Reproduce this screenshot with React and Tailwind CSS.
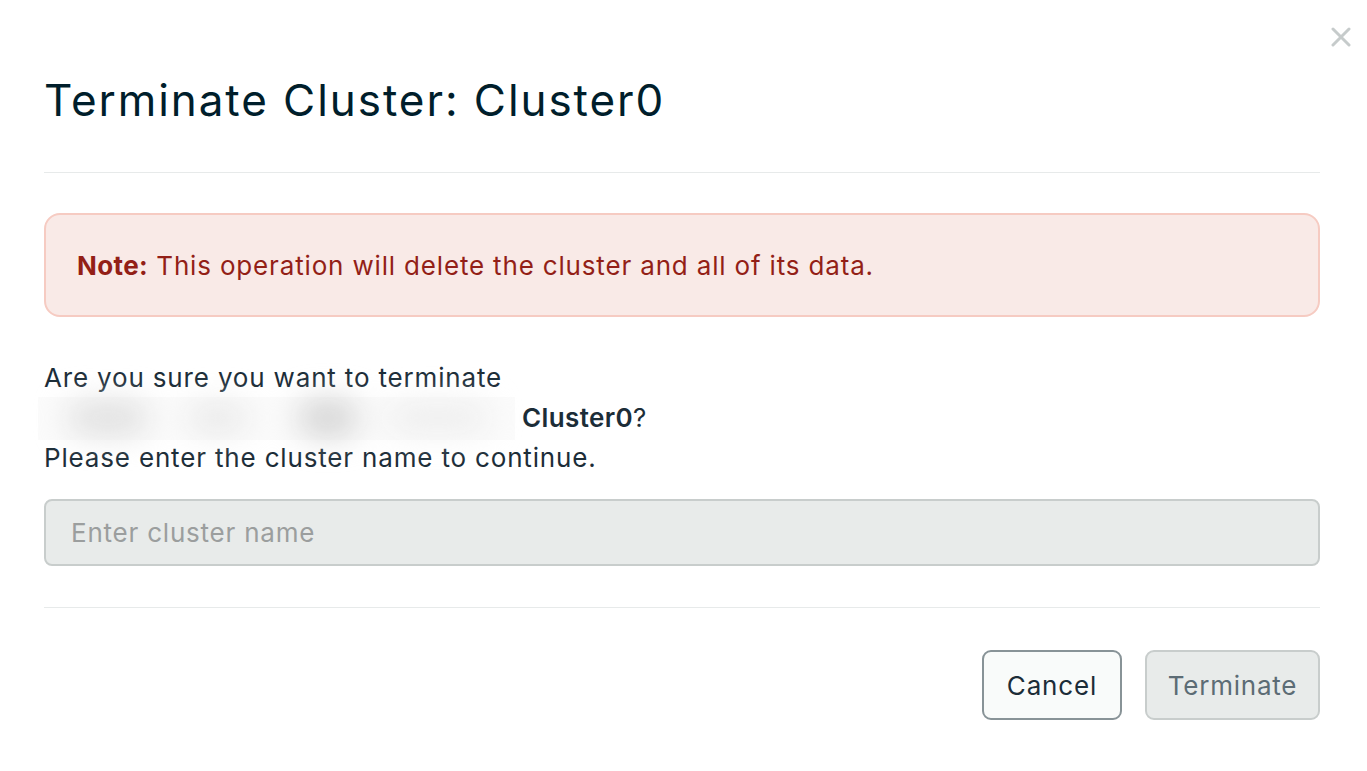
export default function App() {
  const font = { fontFamily: '"Inter", "Open Sans", sans-serif' };
  return (
    <div className="relative w-[1367px] h-[771px] bg-white overflow-hidden tracking-[0.052em]" style={font}>
      <button className="absolute top-[26px] right-[15px] w-[22px] h-[22px] flex items-center justify-center">
        <svg width="20" height="20" viewBox="0 0 20 20" fill="none">
          <path d="M2 2L18 18M18 2L2 18" stroke="#c6cbcb" strokeWidth="3" strokeLinecap="round" />
        </svg>
      </button>
      <div className="pl-[44px] pr-[47px] pt-[76px]">
        <h1 className="text-[44px] leading-[48px] text-[#001e2b] font-normal tracking-[0.044em]">
          Terminate Cluster: Cluster0
        </h1>
        <div className="mt-[48px] h-px bg-[#e7eaea]" />
        <div className="mt-[40px] h-[104px] rounded-[16px] border-2 border-[#f6cbc2] bg-[#f9eae7] flex items-center px-[31px]">
          <p className="text-[26px] text-[#931f17]">
            <span className="font-bold tracking-[0.015em]">Note:</span> This operation will delete the cluster and all of its data.
          </p>
        </div>
        <div className="mt-[41px] text-[26px] leading-[40px] text-[#1c2d38]">
          <p>Are you sure you want to terminate</p>
          <div className="flex items-center h-[40px]">
            <div className="-ml-[6px] mr-[7px] w-[477px] h-[43px] shrink-0 flex items-center bg-[#fbfbfb]">
              <div className="w-full h-full flex items-center blur-lg">
                <span className="ml-[30px] w-[80px] h-[30px] rounded-full bg-[#dcdcdc]" />
                <span className="ml-[40px] w-[60px] h-[26px] rounded-full bg-[#e6e6e6]" />
                <span className="ml-[50px] w-[60px] h-[34px] rounded-full bg-[#d0d0d0]" />
                <span className="ml-[30px] w-[100px] h-[26px] rounded-full bg-[#ececec]" />
              </div>
            </div>
            <span className="font-semibold tracking-[0.015em]">Cluster0</span>?
          </div>
          <p>Please enter the cluster name to continue.</p>
        </div>
        <div className="mt-[21px] h-[67px] rounded-[8px] border-2 border-[#c8cdcc] bg-[#e8ebea] flex items-center px-[25px]">
          <span className="text-[26px] text-[#9b9e9e] tracking-[0.03em]">Enter cluster name</span>
        </div>
        <div className="mt-[41px] h-px bg-[#e7eaea]" />
        <div className="mt-[42px] flex justify-end gap-[23px]">
          <button className="w-[140px] h-[70px] rounded-[9px] border-2 border-[#889397] bg-[#f9fbfa] text-[26px] text-[#1c2d38] tracking-[0.033em]">
            Cancel
          </button>
          <button className="w-[175px] h-[70px] rounded-[9px] border-2 border-[#c8cdcc] bg-[#e8ebea] text-[26px] text-[#5c6c75] tracking-[0.03em]">
            Terminate
          </button>
        </div>
      </div>
    </div>
  );
}
